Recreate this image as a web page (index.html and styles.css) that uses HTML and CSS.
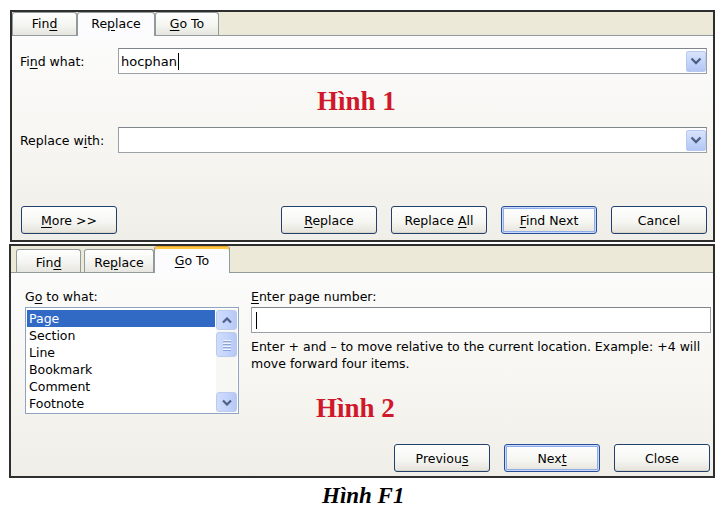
FILE: index.html
```html
<!DOCTYPE html>
<html>
<head>
<meta charset="utf-8">
<title>Find and Replace</title>
<link rel="stylesheet" href="styles.css">
</head>
<body>

<div class="dialog d1">
  <div class="tabs">
    <div class="tab">Fin<u>d</u></div>
    <div class="tab on">Re<u>p</u>lace</div>
    <div class="tab"><u>G</u>o To</div>
  </div>
  <div class="body">
    <div class="field">
      <label>Fi<u>n</u>d what:</label>
      <div class="combo">
        <span class="val">hocphan</span><span class="caret"></span>
        <span class="drop"><svg width="12" height="8" viewBox="0 0 12 8"><path d="M1.5 1.5 L6 6 L10.5 1.5" fill="none" stroke="#4d6185" stroke-width="2.4"/></svg></span>
      </div>
    </div>
    <div class="tag">Hình 1</div>
    <div class="field">
      <label>Replace w<u>i</u>th:</label>
      <div class="combo">
        <span class="val"></span>
        <span class="drop"><svg width="12" height="8" viewBox="0 0 12 8"><path d="M1.5 1.5 L6 6 L10.5 1.5" fill="none" stroke="#4d6185" stroke-width="2.4"/></svg></span>
      </div>
    </div>
    <div class="actions">
      <button class="btn"><u>M</u>ore &gt;&gt;</button>
      <div class="grp">
        <button class="btn"><u>R</u>eplace</button>
        <button class="btn">Replace <u>A</u>ll</button>
        <button class="btn def"><u>F</u>ind Next</button>
        <button class="btn">Cancel</button>
      </div>
    </div>
  </div>
</div>

<div class="dialog d2">
  <div class="tabs">
    <div class="tab">Fin<u>d</u></div>
    <div class="tab">Re<u>p</u>lace</div>
    <div class="tab on"><u>G</u>o To</div>
  </div>
  <div class="body">
    <div class="cols">
      <div class="col">
        <div class="lbl">G<u>o</u> to what:</div>
        <div class="list">
          <ul class="items">
            <li class="sel">Page</li>
            <li>Section</li>
            <li>Line</li>
            <li>Bookmark</li>
            <li>Comment</li>
            <li>Footnote</li>
          </ul>
          <div class="sbar">
            <span class="sbtn"><svg width="10" height="7" viewBox="0 0 10 7"><path d="M1 5.5 L5 1.5 L9 5.5" fill="none" stroke="#4d6185" stroke-width="2.2"/></svg></span>
            <span class="thumb"><i></i><i></i><i></i><i></i></span>
            <span class="sfill"></span>
            <span class="sbtn"><svg width="10" height="7" viewBox="0 0 10 7"><path d="M1 1.5 L5 5.5 L9 1.5" fill="none" stroke="#4d6185" stroke-width="2.2"/></svg></span>
          </div>
        </div>
      </div>
      <div class="col">
        <div class="lbl"><u>E</u>nter page number:</div>
        <div class="input"><span class="caret"></span></div>
        <p class="help">Enter + and – to move relative to the current location. Example: +4 will move forward four items.</p>
        <div class="tag t2">Hình 2</div>
      </div>
    </div>
    <div class="actions">
      <div class="grp">
        <button class="btn">Previou<u>s</u></button>
        <button class="btn def">Nex<u>t</u></button>
        <button class="btn">Close</button>
      </div>
    </div>
  </div>
</div>

<div class="caption">Hình F1</div>

</body>
</html>
```

FILE: styles.css
```css
html, body {margin: 0; padding: 0;}
body {background: #fff; color: #000; font: 12.5px "DejaVu Sans", Tahoma, Verdana, sans-serif; padding-top: 10px;}
u {text-decoration: underline; text-underline-offset: 2px;}

/* dialog frame */
.dialog {box-sizing: border-box; border: 2px solid #2e2e2e; background: linear-gradient(#fdfdfe, #f7f6f2 55%, #efeee8); display: flex; flex-direction: column;}
.d1 {margin-left: 10px; width: 705px; height: 232px;}
.d2 {margin: 2px 0 0 9px; width: 706px; height: 234px;}

/* tab strip */
.tabs {display: flex; align-items: flex-end; background: #ece9d8; border-bottom: 1px solid #919b9c;}
.d1 .tabs {height: 23px;}
.d2 .tabs {height: 26px; padding-left: 5px; gap: 3px;}
.tab {box-sizing: border-box; height: 23px; line-height: 22px; text-align: center; border: 1px solid #919b9c; border-bottom: 0; border-radius: 3px 3px 0 0; background: linear-gradient(#fff, #f3f3ef 60%, #e6e5df);}
.tab.on {background: #fcfcfe; margin-bottom: -1px; height: 24px;}
.d1 .tab:nth-child(1) {width: 65px;}
.d1 .tab:nth-child(2) {width: 78px;}
.d1 .tab:nth-child(3) {width: 64px;}
.d2 .tab {line-height: 25px;}
.d2 .tab:nth-child(1) {width: 65px;}
.d2 .tab:nth-child(2) {width: 70px; margin-right: -3px;}
.d2 .tab:nth-child(3) {width: 76px; height: 27px; line-height: 27px; border-top: 1px solid #e6a22e; box-shadow: inset 0 2px #ffc83c;}

.body {flex: 1; display: flex; flex-direction: column;}
.d1 .body {padding: 12px 6px 6px 8px;}
.d2 .body {padding: 16px 2px 4px 14px;}

/* find / replace rows */
.field {display: flex; align-items: center; height: 26px;}
.field label {width: 98px;}
.combo {flex: 1; height: 26px; box-sizing: border-box; border: 1px solid #9aa0a6; border-top-color: #7f858c; background: #fff; display: flex; align-items: center; padding-left: 2px; font-size: 13px;}
.combo .val {white-space: pre;}
.caret {display: inline-block; width: 1px; height: 17px; background: #000; margin-left: 1px;}
.drop {margin-left: auto; width: 20px; height: 21px; box-sizing: border-box; border: 1px solid #b9c9ef; border-radius: 2px; background: linear-gradient(#d8e3fd, #c1d2fa 60%, #b3c6f5); display: flex; align-items: center; justify-content: center;}

.tag {font: bold 27px/28px "Liberation Serif", "Times New Roman", serif; color: #d0182b; height: 28px;}
.d1 .tag {margin: 13px 0 12px 297px;}
.t2 {margin: 22px 0 0 65px;}

/* button row */
.actions {display: flex; margin-top: auto;}
.d1 .actions {padding: 0 0 0 1px;}
.d2 .actions {padding-right: 1px;}
.grp {margin-left: auto; display: flex; gap: 14px;}
.btn {width: 96px; height: 28px; box-sizing: border-box; border: 1px solid #22406e; border-radius: 3px; background: linear-gradient(#ffffff, #f5f5f1 60%, #e4e2d9); font: 12.5px "DejaVu Sans", Tahoma, Verdana, sans-serif; color: #000; padding: 0; box-shadow: inset 0 -1px #d8d4c8;}
.btn.def {border-color: #2a4f96; box-shadow: inset 0 0 0 1px #c8dafb, inset 0 0 0 2px #8fadeb;}

/* go to page */
.cols {display: grid; grid-template-columns: 214px 460px; column-gap: 12px;}
.lbl {height: 15px; line-height: 15px; margin-bottom: 3px;}
.list {height: 107px; box-sizing: border-box; border: 1px solid #8ea4c0; background: #fff; display: flex; padding: 1px;}
.items {list-style: none; margin: 0; padding: 1px 0 0; flex: 1;}
.items li {height: 17px; line-height: 17px; padding-left: 2px; font-size: 12.5px;}
.items li.sel {background: #316ac5; color: #fff;}
.sbar {width: 21px; margin-left: 1px; display: flex; flex-direction: column; background: #f7f7f3; padding-top: 1px;}
.sbtn, .thumb {box-sizing: border-box; border: 1px solid #bccbed; border-radius: 3px; background: linear-gradient(90deg, #cfdcfb, #c4d4fd 50%, #b6c8f4); display: flex; align-items: center; justify-content: center;}
.sbtn {height: 20px;}
.thumb {height: 25px; margin-top: 2px; flex-direction: column; gap: 2px;}
.thumb i {display: block; width: 8px; height: 1px; background: #eef3fe; box-shadow: 0 1px #8ca6dc;}
.sfill {flex: 1;}

.input {height: 26px; box-sizing: border-box; border: 1px solid #9aa0a6; border-top-color: #7f858c; background: #fff; display: flex; align-items: center; padding-left: 3px;}
.help {margin: 5px 0 0; line-height: 17px;}

.caption {margin: 5px 0 0 322px; font: italic bold 23px/26px "Liberation Serif", "Times New Roman", serif;}
```
